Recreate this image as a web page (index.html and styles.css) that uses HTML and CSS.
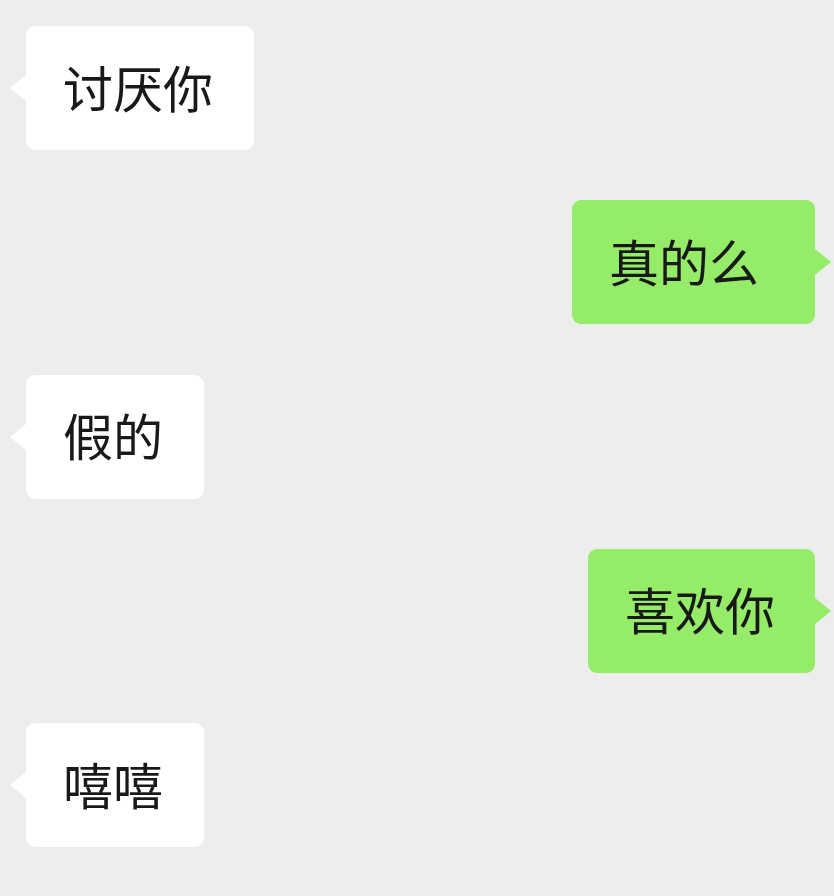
FILE: index.html
```html
<!DOCTYPE html>
<html lang="zh-CN">
<head>
<meta charset="utf-8">
<title>聊天</title>
<link rel="stylesheet" href="styles.css">
</head>
<body>
<main class="chat">
  <div class="row row-left"><div class="bubble bubble-in">讨厌你</div></div>
  <div class="row row-right"><div class="bubble bubble-out bubble-wide">真的么</div></div>
  <div class="row row-left"><div class="bubble bubble-in">假的</div></div>
  <div class="row row-right"><div class="bubble bubble-out">喜欢你</div></div>
  <div class="row row-left"><div class="bubble bubble-in">嘻嘻</div></div>
</main>
</body>
</html>
```
FILE: styles.css
```css
html, body {
  margin: 0;
  padding: 0;
  background: #ededed;
}
body {
  width: 834px;
  height: 896px;
  overflow: hidden;
  font-family: "Noto Sans CJK SC", "Noto Sans", sans-serif;
}
.chat {
  display: flex;
  flex-direction: column;
  gap: 50.3px;
  padding: 26px 19px 0 26px;
}
.row {
  display: flex;
}
.row-left {
  justify-content: flex-start;
}
.row-right {
  justify-content: flex-end;
}
.bubble {
  position: relative;
  box-sizing: border-box;
  height: 124px;
  padding: 0 41px 5px 37px;
  display: flex;
  align-items: center;
  font-size: 50px;
  line-height: 1;
  color: #191919;
  border-radius: 9px;
}
.bubble-in {
  background: #ffffff;
}
.bubble-out {
  background: #95ec69;
  padding-left: 37px;
  padding-right: 40px;
}
.bubble-wide {
  padding-right: 56px;
}
.bubble::before {
  content: "";
  position: absolute;
  top: 50%;
  width: 0;
  height: 0;
  margin-top: -13px;
  border-top: 13px solid transparent;
  border-bottom: 13px solid transparent;
}
.bubble-in::before {
  left: -16px;
  border-right: 16px solid #ffffff;
}
.bubble-out::before {
  right: -16px;
  border-left: 16px solid #95ec69;
}
```
